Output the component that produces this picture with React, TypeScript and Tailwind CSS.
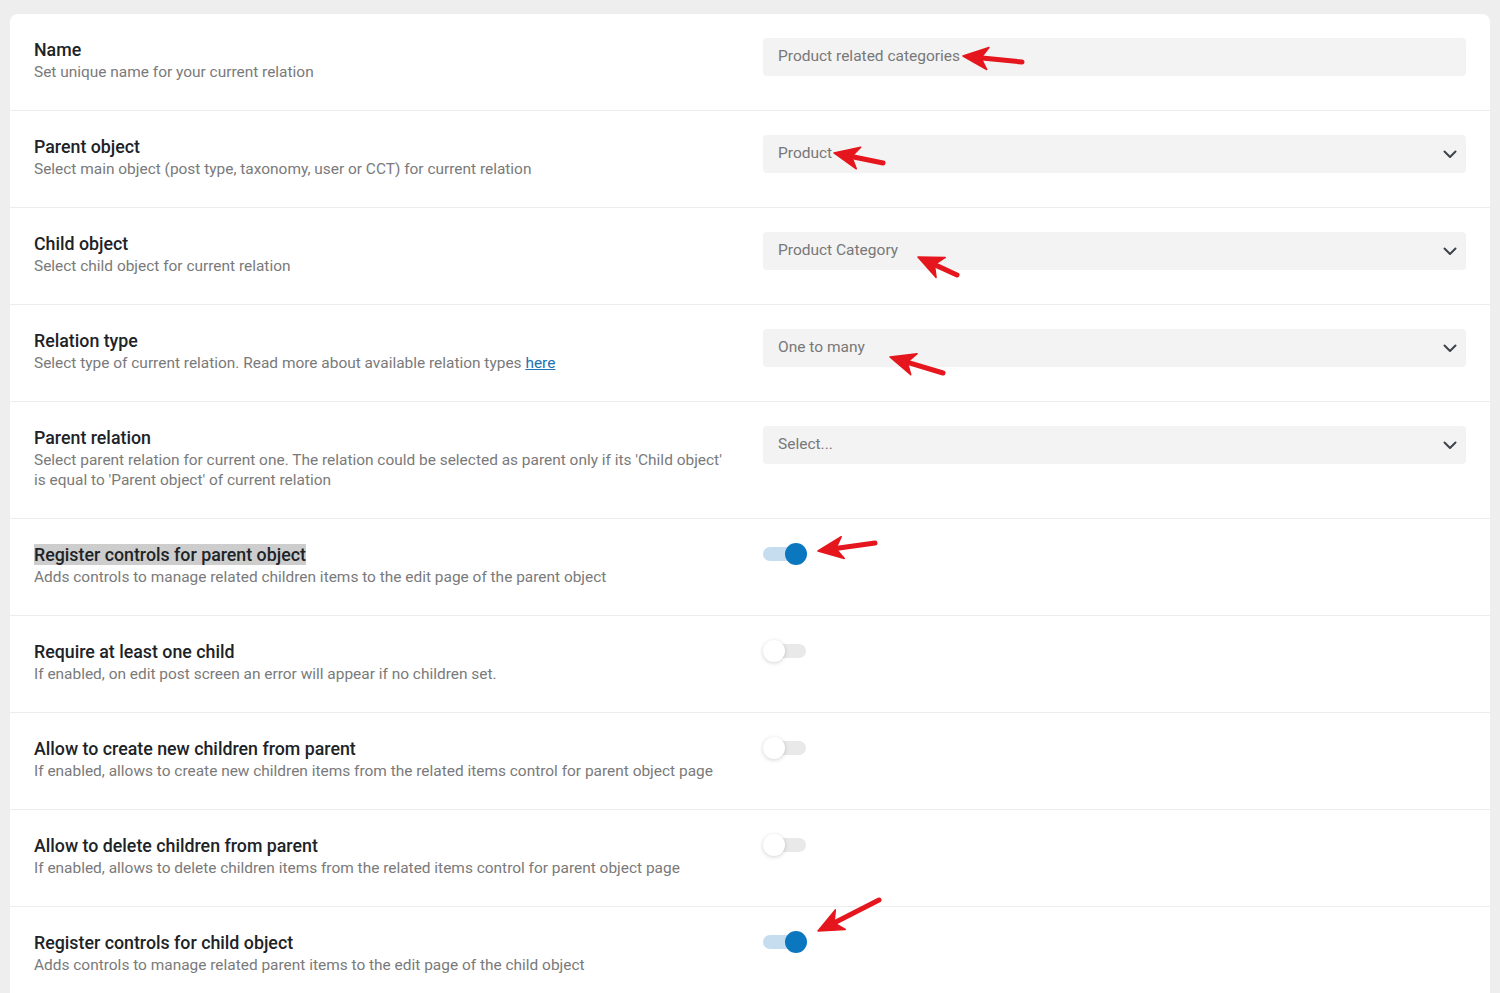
import { useState } from 'react';

type Field =
  | { kind: 'input'; value: string }
  | { kind: 'select'; value: string }
  | { kind: 'toggle'; on: boolean };

type Row = {
  title: string;
  desc: React.ReactNode;
  field: Field;
  marked?: boolean;
};

const rows: Row[] = [
  {
    title: 'Name',
    desc: 'Set unique name for your current relation',
    field: { kind: 'input', value: 'Product related categories' },
  },
  {
    title: 'Parent object',
    desc: 'Select main object (post type, taxonomy, user or CCT) for current relation',
    field: { kind: 'select', value: 'Product' },
  },
  {
    title: 'Child object',
    desc: 'Select child object for current relation',
    field: { kind: 'select', value: 'Product Category' },
  },
  {
    title: 'Relation type',
    desc: (
      <>
        Select type of current relation. Read more about available relation types{' '}
        <a href="#" className="text-[#2271b1] underline">
          here
        </a>
      </>
    ),
    field: { kind: 'select', value: 'One to many' },
  },
  {
    title: 'Parent relation',
    desc: "Select parent relation for current one. The relation could be selected as parent only if its 'Child object' is equal to 'Parent object' of current relation",
    field: { kind: 'select', value: 'Select...' },
  },
  {
    title: 'Register controls for parent object',
    desc: 'Adds controls to manage related children items to the edit page of the parent object',
    field: { kind: 'toggle', on: true },
    marked: true,
  },
  {
    title: 'Require at least one child',
    desc: 'If enabled, on edit post screen an error will appear if no children set.',
    field: { kind: 'toggle', on: false },
  },
  {
    title: 'Allow to create new children from parent',
    desc: 'If enabled, allows to create new children items from the related items control for parent object page',
    field: { kind: 'toggle', on: false },
  },
  {
    title: 'Allow to delete children from parent',
    desc: 'If enabled, allows to delete children items from the related items control for parent object page',
    field: { kind: 'toggle', on: false },
  },
  {
    title: 'Register controls for child object',
    desc: 'Adds controls to manage related parent items to the edit page of the child object',
    field: { kind: 'toggle', on: true },
  },
];

// red callouts: [tipX, tipY, tailX, tailY]
const arrows: [number, number, number, number][] = [
  [963, 56, 1022, 62],
  [834, 153, 883, 163],
  [918, 257, 957, 275],
  [890, 357, 943, 373],
  [818, 551, 875, 543],
  [818, 931, 879, 900],
];

function Chevron() {
  return (
    <svg width="14" height="9" viewBox="0 0 14 9" fill="none" className="shrink-0">
      <path d="M1.5 1.5L7 7L12.5 1.5" stroke="#3c434a" strokeWidth="2" strokeLinecap="round" strokeLinejoin="round" />
    </svg>
  );
}

function Toggle({ initial }: { initial: boolean }) {
  const [on, setOn] = useState(initial);
  return (
    <button
      type="button"
      onClick={() => setOn((v) => !v)}
      className="relative flex h-[22px] w-[44px] items-center"
    >
      <span className={`h-[14px] w-[43px] rounded-full ${on ? 'bg-[#c5ddef]' : 'bg-[#e9e9e9]'}`} />
      <span
        className={`absolute top-0 h-[22px] w-[22px] rounded-full ${
          on ? 'left-[22px] bg-[#0b77bf]' : 'left-0 bg-white shadow-[0_1px_4px_rgba(0,0,0,0.18)]'
        }`}
      />
    </button>
  );
}

function Control({ field }: { field: Field }) {
  if (field.kind === 'toggle') return <Toggle initial={field.on} />;
  return (
    <div className="flex h-[38px] items-center justify-between rounded-[4px] bg-[#f3f3f3] pl-[15px] pr-[9px] text-[15.5px] text-[#787878]">
      <span>{field.value}</span>
      {field.kind === 'select' && <Chevron />}
    </div>
  );
}

function Arrow({ tip }: { tip: [number, number, number, number] }) {
  const [tx, ty, sx, sy] = tip;
  const len = Math.hypot(sx - tx, sy - ty);
  const dx = (sx - tx) / len;
  const dy = (sy - ty) / len;
  const nx = -dy;
  const ny = dx;
  const L = 25;
  const W = 11;
  const head = [
    [tx, ty],
    [tx + dx * L + nx * W, ty + dy * L + ny * W],
    [tx + dx * L * 0.72, ty + dy * L * 0.72],
    [tx + dx * L - nx * W, ty + dy * L - ny * W],
  ]
    .map((p) => p.join(','))
    .join(' ');
  return (
    <g fill="#e5161d" stroke="#e5161d">
      <polygon points={head} strokeWidth="1.5" strokeLinejoin="round" />
      <line x1={tx + dx * 14} y1={ty + dy * 14} x2={sx} y2={sy} strokeWidth="5" strokeLinecap="round" />
    </g>
  );
}

export default function App() {
  return (
    <div className="relative min-h-[993px] overflow-hidden bg-[#eeeeee] px-[10px] pt-[14px] font-['Roboto',sans-serif]">
      <div className="rounded-t-[8px] bg-white">
        {rows.map((row) => (
          <div
            key={row.title}
            className="flex gap-[30px] border-b border-[#ededed] px-6 pb-7 pt-6"
          >
            <div className="flex-1">
              <div className="text-[17.8px] font-medium leading-[24px] text-[#1d2327]">
                <span className={row.marked ? 'bg-[#cdcdcd]' : ''}>{row.title}</span>
              </div>
              <div className="text-[15.45px] leading-[20px] text-[#7a7a7a]">{row.desc}</div>
            </div>
            <div className="w-[703px]">
              <Control field={row.field} />
            </div>
          </div>
        ))}
      </div>
      <svg className="pointer-events-none absolute left-0 top-0" width="1500" height="993">
        {arrows.map((a) => (
          <Arrow key={a.join('-')} tip={a} />
        ))}
      </svg>
    </div>
  );
}
